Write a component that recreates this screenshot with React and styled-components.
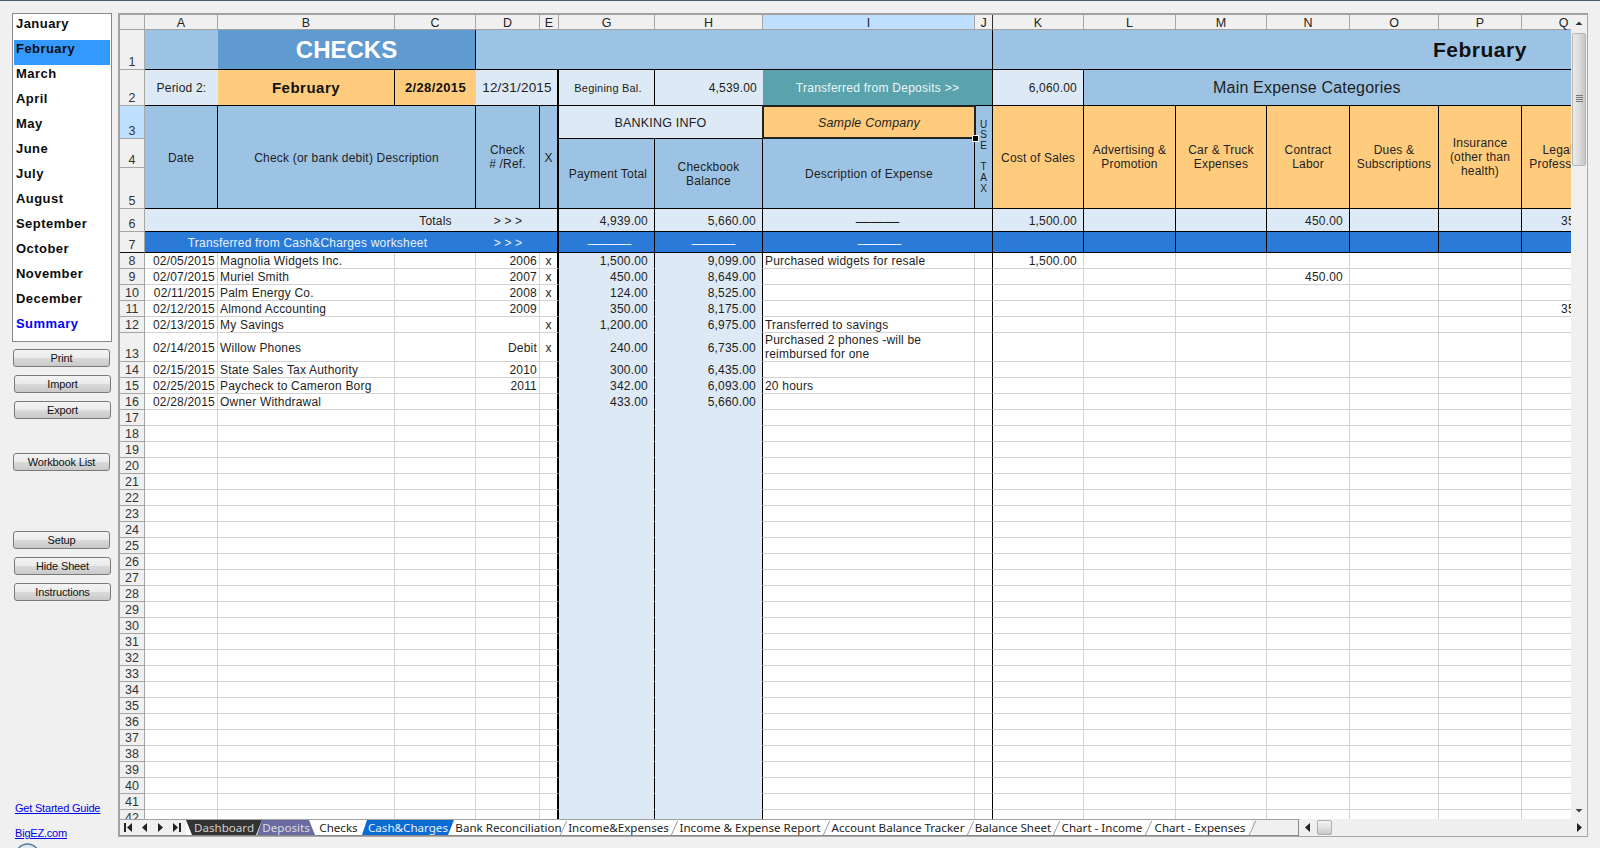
import React from "react";
import styled, { createGlobalStyle, css } from "styled-components";

const BLUE = "#9dc3e4", MID = "#5f9bd0", PALE = "#dde9f4", ORANGE = "#ffcc7e", TEAL = "#5aa3ad", DEEP = "#2a7bd7", GRID = "#d2d2d2", INK = "#1e1e1e";
const UI = `"Liberation Sans", Arial, sans-serif`;
const TAB_FONT = `"Noto Sans", "Liberation Sans", sans-serif`;

const Global = createGlobalStyle`
  html, body { margin: 0; height: 848px; overflow: hidden; background: #f0f0f0; }
  #root { height: 848px; }
`;

const Page = styled.div`
  height: 848px; overflow: hidden; background: #f0f0f0;
  border-top: 1px solid #4c5a68; box-sizing: border-box;
  display: flex; align-items: flex-start;
  font-family: "Liberation Sans", Arial, sans-serif;
`;

/* ---------- sidebar ---------- */
const Sidebar = styled.aside`
  width: 118px; flex: none; height: 847px; box-sizing: border-box; padding: 12px 0 0 12px;
  display: flex; flex-direction: column; align-items: flex-start; overflow: hidden;
`;
const MonthList = styled.ul`
  list-style: none; margin: 0; padding: 1px; width: 100px; height: 329px; box-sizing: border-box;
  background: #fff; border: 1px solid #8a8a8a;
`;
const Month = styled.li`
  height: 25px; padding: 1px 0 0 2px; box-sizing: border-box; line-height: 16px;
  font-size: 13px; font-weight: 700; letter-spacing: .45px; color: ${p => p.$summary ? "#0000ff" : "#0c0c0c"};
  background: ${p => p.$active ? "#3399ff" : "transparent"};
`;
const SideButton = styled.button`
  display: block; width: 97px; height: 18px; padding: 0; box-sizing: border-box; flex: none;
  margin: ${p => p.$top}px 0 0 ${p => p.$shift}px;
  border: 1px solid #7a7a7a; border-radius: 3px;
  background: linear-gradient(#f4f4f4 0%, #ebebeb 48%, #dadada 52%, #c9c9c9 100%);
  font: 11px/16px ${UI}; letter-spacing: -.15px; color: #111;
`;
const Guide = styled.a`
  margin: ${p => p.$top}px 0 0 ${p => p.$left}px; font: 11px/16px ${UI}; letter-spacing: -.2px; color: #0000ee; text-decoration: underline;
`;
const LogoCircle = styled.svg`
  margin: 2px 0 0 3px; flex: none;
`;

/* ---------- workbook frame ---------- */
const Frame = styled.main`
  width: 1470px; height: 824px; margin-top: 12px; flex: none; box-sizing: border-box;
  border-top: 2px solid #a2a2a2; border-left: 2px solid #a2a2a2; border-right: 1px solid #a8a8a8; border-bottom: 1px solid #a8a8a8;
  display: flex; flex-direction: column;
`;
const Upper = styled.div`
  display: flex; height: 804px; flex: none;
`;
const SheetClip = styled.div`
  width: 1451px; height: 804px; overflow: hidden; background: #fff; flex: none;
`;
const COLS = [25, 73, 177, 81, 64, 19, 96, 108, 212, 18, 91, 92, 91, 83, 89, 83, 84];
const ROW_H = [15, 40, 36, 33, 29, 41, 23, 21, 16, 16, 16, 16, 16, 29, ...Array(29).fill(16)];
const Sheet = styled.div`
  display: grid;
  grid-template-columns: ${COLS.map(w => w + "px").join(" ")};
  grid-template-rows: ${ROW_H.map(h => h + "px").join(" ")};
  font-size: 12px; letter-spacing: .2px; color: ${INK};
`;

const place = css`
  grid-column: ${p => p.$c} / span ${p => p.$cs || 1};
  grid-row: ${p => p.$r} / span ${p => p.$rs || 1};
  box-sizing: border-box; min-width: 0;
`;
const ColHead = styled.div`
  ${place}
  display: flex; align-items: center; justify-content: center; padding-top: 2px;
  background: ${p => p.$active ? "#bfdfff" : "#f0f0f0"};
  border-right: 1px solid ${p => p.$dark ? "#333" : "#a6a6a6"}; border-bottom: 1px solid #a2a2a2;
  font-size: 12.5px; letter-spacing: 0; color: #222;
`;
const RowHead = styled.div`
  ${place}
  display: flex; align-items: flex-end; justify-content: center;
  background: ${p => p.$active ? "#bfdfff" : "#f0f0f0"};
  border-right: 1px solid #a6a6a6; border-bottom: 1px solid ${p => p.$strong ? "#111" : "#a6a6a6"};
  font-size: 12.5px; line-height: 13px; letter-spacing: 0; color: #333; overflow: hidden;
`;
const Block = styled.div`
  ${place}
  display: flex; align-items: center; justify-content: ${p => p.$j || "center"};
  text-align: center; white-space: pre-line; line-height: 14px;
  background: ${p => p.$bg || "transparent"};
  border-right: ${p => p.$rw ?? 1}px solid ${p => p.$rc || "#000"};
  border-bottom: 1px solid #000;
  padding: ${p => p.$flat ? 0 : 1}px ${p => p.$pr ?? 0}px 0 ${p => p.$pl ?? 0}px;
  color: ${p => p.$fg || INK};
  font-size: ${p => p.$fs || 12}px;
  font-weight: ${p => p.$bold ? 700 : 400};
  font-style: ${p => p.$it ? "italic" : "normal"};
  letter-spacing: ${p => p.$ls ?? .2}px;
  position: ${p => p.$rel ? "relative" : "static"};
`;
const VerticalTag = styled(Block)`
  font-size: 10px; line-height: 10.7px; letter-spacing: 0; padding-top: 0;
`;
const SelectionBox = styled.span`
  position: absolute; left: -1px; top: -1px; right: -1px; bottom: -1px;
  border: 2px solid #222; pointer-events: none;
`;
const FillHandle = styled.span`
  position: absolute; right: -5px; bottom: -5px; width: 7px; height: 7px; box-sizing: border-box;
  background: #000; border: 1px solid #fff;
`;
const DataCell = styled.div`
  ${place}
  display: flex; align-items: center; justify-content: ${p => p.$j || "flex-start"};
  padding: ${p => p.$flat ? 0 : 1}px ${p => p.$pr ?? 2}px 0 ${p => p.$pl ?? 2}px;
  background: ${p => p.$pale ? PALE : "#fff"};
  border-right: ${p => p.$rw || 1}px solid ${p => p.$rc || GRID};
  border-bottom: 1px solid ${p => p.$pale ? PALE : GRID};
  line-height: 14px; white-space: pre-line; overflow: hidden;
`;

/* ---------- scrollbars and tabs ---------- */
const VScroll = styled.div`
  width: 16px; flex: none; display: flex; flex-direction: column; align-items: center; background: #f0f0f0;
`;
const ArrowBox = styled.svg`
  flex: none; display: block;
`;
const VThumb = styled.div`
  width: 14px; height: 133px; margin-top: 1px; box-sizing: border-box; flex: none;
  border: 1px solid #b6b6b6; border-radius: 2px;
  background: linear-gradient(90deg, #ececec, #dcdcdc 50%, #c6c6c6);
  display: flex; flex-direction: column; align-items: center; justify-content: flex-start; gap: 1px; padding-top: 61px;
`;
const Grip = styled.i`
  display: block; width: 7px; height: 1px; background: #777;
`;
const Spacer = styled.div`
  flex: 1;
`;
const Lower = styled.div`
  height: 17px; flex: none; display: flex; background: #f0f0f0;
`;
const NavArrows = styled.div`
  width: 66px; flex: none; display: flex; align-items: center; justify-content: space-between; padding: 0 5px 0 4px; box-sizing: border-box;
  background: #f0f0f0; border-top: 1px solid #a2a2a2; border-bottom: 1px solid #8a8a8a;
`;
const TabStrip = styled.div`
  display: flex; width: 1113px; flex: none; box-sizing: border-box;
  background: linear-gradient(90deg, #fff 1066px, #f0f0f0 1066px);
  border-top: 1px solid #a2a2a2; border-bottom: 1px solid #8a8a8a; border-right: 1px solid #8a8a8a;
  font: 11.6px/15px ${TAB_FONT}; color: #222;
`;
const Tab = styled.div`
  width: ${p => p.$w}px; flex: none; position: relative; display: flex; align-items: center; justify-content: center;
  box-sizing: border-box; white-space: nowrap;
  margin-left: ${p => p.$ml || 0}px; padding-left: ${p => p.$pl || 0}px;
  ${p => p.$fill && css`
    background: ${p.$fill}; color: ${p.$fg};
    clip-path: polygon(${p.$shape});
  `}
  ${p => p.$slash && css`
    &::after {
      content: ""; position: absolute; right: -1px; top: 1px; bottom: 0; width: 1px; background: #999;
      transform: skewX(-24deg);
    }
  `}
`;
const HScroll = styled.div`
  flex: 1; display: flex; align-items: center; padding: 0 5px 0 6px; box-sizing: border-box; background: #efefef;
`;
const HThumb = styled.div`
  width: 15px; height: 15px; margin-left: 7px; box-sizing: border-box; border: 1px solid #b0b0b0; border-radius: 2px; flex: none;
  background: linear-gradient(#f2f2f2, #e2e2e2 50%, #c8c8c8);
`;

const Left = () => <ArrowBox width="5" height="9" viewBox="0 0 5 9"><path d="M5 0v9L0 4.5z" fill="#222" /></ArrowBox>;
const Right = () => <ArrowBox width="5" height="9" viewBox="0 0 5 9"><path d="M0 0v9l5-4.5z" fill="#222" /></ArrowBox>;
const First = () => <ArrowBox width="8" height="9" viewBox="0 0 8 9"><path d="M0 0h2v9H0zM8 0v9L3 4.5z" fill="#222" /></ArrowBox>;
const Last = () => <ArrowBox width="8" height="9" viewBox="0 0 8 9"><path d="M6 0h2v9H6zM0 0v9l5-4.5z" fill="#222" /></ArrowBox>;

const MONTHS = ["January", "February", "March", "April", "May", "June", "July", "August", "September", "October", "November", "December", "Summary"];
const LETTERS = ["A", "B", "C", "D", "E", "G", "H", "I", "J", "K", "L", "M", "N", "O", "P", "Q"];
const C = Object.fromEntries(LETTERS.map((l, i) => [l, i + 2]));
const ORANGE_HEADS = [["K", "Cost of Sales"], ["L", "Advertising &\nPromotion"], ["M", "Car & Truck\nExpenses"], ["N", "Contract\nLabor"], ["O", "Dues &\nSubscriptions"], ["P", "Insurance\n(other than\nhealth)"], ["Q", "Legal &\nProfessional"]];
const ENTRIES = {
  8: { A: "02/05/2015", B: "Magnolia Widgets Inc.", D: "2006", E: "x", G: "1,500.00", H: "9,099.00", I: "Purchased widgets for resale", K: "1,500.00" },
  9: { A: "02/07/2015", B: "Muriel Smith", D: "2007", E: "x", G: "450.00", H: "8,649.00", N: "450.00" },
  10: { A: "02/11/2015", B: "Palm Energy Co.", D: "2008", E: "x", G: "124.00", H: "8,525.00" },
  11: { A: "02/12/2015", B: "Almond Accounting", D: "2009", G: "350.00", H: "8,175.00", Q: "350.00" },
  12: { A: "02/13/2015", B: "My Savings", E: "x", G: "1,200.00", H: "6,975.00", I: "Transferred to savings" },
  13: { A: "02/14/2015", B: "Willow Phones", D: "Debit", E: "x", G: "240.00", H: "6,735.00", I: "Purchased 2 phones -will be\nreimbursed for one" },
  14: { A: "02/15/2015", B: "State Sales Tax Authority", D: "2010", G: "300.00", H: "6,435.00" },
  15: { A: "02/25/2015", B: "Paycheck to Cameron Borg", D: "2011", G: "342.00", H: "6,093.00", I: "20 hours" },
  16: { A: "02/28/2015", B: "Owner Withdrawal", G: "433.00", H: "5,660.00" },
};
const numeric = l => ["G", "H", "K", "L", "M", "N", "O", "P", "Q"].includes(l);
const TABS = [
  { t: "Dashboard", w: 76, fill: "#333333", fg: "#cfcfcf", shape: "0 0, 100% 0, calc(100% - 6px) 100%, 6px 100%" },
  { t: "Deposits", w: 58, ml: -5, fill: "#6b6ba3", fg: "#dcdcdc", shape: "5px 0, calc(100% - 6px) 0, 100% 100%, 0 100%" },
  { t: "Checks", w: 47 },
  { t: "Cash&Charges", w: 92, fill: "#0b6bd3", fg: "#e8f0ff", shape: "5px 0, 100% 0, calc(100% - 6px) 100%, 0 100%" },
  { t: "Bank Reconciliation", w: 115, ml: -6, pl: 6, slash: 1 },
  { t: "Income&Expenses", w: 111, slash: 1 },
  { t: "Income & Expense Report", w: 152, slash: 1 },
  { t: "Account Balance Tracker", w: 144, slash: 1 },
  { t: "Balance Sheet", w: 86, slash: 1 },
  { t: "Chart - Income", w: 92, slash: 1 },
  { t: "Chart - Expenses", w: 104, slash: 1 },
];

function DataRows() {
  const out = [];
  for (let n = 8; n <= 42; n++) {
    const e = ENTRIES[n] || {};
    const gridRow = n + 1;
    out.push(<RowHead key={"r" + n} $c={1} $r={gridRow}>{n}</RowHead>);
    LETTERS.forEach(l => {
      const right = l === "A" || l === "D" || numeric(l);
      const black = l === "E" || l === "G" || l === "H" || l === "J";
      out.push(
        <DataCell key={l + n} $c={C[l]} $r={gridRow}
          $j={right ? "flex-end" : l === "E" ? "center" : "flex-start"}
          $pr={numeric(l) ? 6 : l === "E" ? 0 : 2}
          $pl={l === "E" ? 0 : 2}
          $pale={l === "G" || l === "H"}
          $rc={black ? "#000" : GRID}
          $rw={l === "E" ? 2 : 1}
          $flat={n === 13 && l === "I"}
        >{e[l]}</DataCell>
      );
    });
  }
  return out;
}

export default function App() {
  return (
    <Page>
      <Global />
      <Sidebar>
        <MonthList>
          {MONTHS.map(m => <Month key={m} $active={m === "February"} $summary={m === "Summary"}>{m}</Month>)}
        </MonthList>
        <SideButton $top={7} $shift={1}>Print</SideButton>
        <SideButton $top={8} $shift={2}>Import</SideButton>
        <SideButton $top={8} $shift={2}>Export</SideButton>
        <SideButton $top={34} $shift={1}>Workbook List</SideButton>
        <SideButton $top={60} $shift={1}>Setup</SideButton>
        <SideButton $top={8} $shift={2}>Hide Sheet</SideButton>
        <SideButton $top={8} $shift={2}>Instructions</SideButton>
        <Guide $top={199} $left={3} href="#">Get Started Guide</Guide>
        <Guide $top={9} $left={3} href="#">BigEZ.com</Guide>
        <LogoCircle width="25" height="25" viewBox="0 0 25 25"><circle cx="12.5" cy="12.5" r="11.5" fill="#dfe8f0" stroke="#55789a" strokeWidth="1.4" /></LogoCircle>
      </Sidebar>
      <Frame>
        <Upper>
          <SheetClip>
            <Sheet>
              <ColHead $c={1} $r={1} />
              {LETTERS.map(l => <ColHead key={l} $c={C[l]} $r={1} $active={l === "I"} $dark={l === "J"}>{l}</ColHead>)}
              {[1, 2, 3, 4, 5, 6, 7].map(n => <RowHead key={n} $c={1} $r={n + 1} $active={n === 3} $strong={n === 7}>{n}</RowHead>)}

              <Block $c={C.A} $r={2} $bg={BLUE} $rw={0} />
              <Block $c={C.B} $cs={2} $r={2} $bg={MID} $fg="#fff" $bold $fs={24} $ls={0}>CHECKS</Block>
              <Block $c={C.D} $cs={6} $r={2} $bg={BLUE} />
              <Block $c={C.K} $cs={7} $r={2} $bg={BLUE} $rw={0} $j="flex-start" $pl={440} $bold $fs={21} $ls={.5} $fg="#111">February</Block>

              <Block $c={C.A} $r={3} $bg={PALE} $rw={0}>Period 2:</Block>
              <Block $c={C.B} $r={3} $bg={ORANGE} $bold $fs={15} $ls={.5} $fg="#111">February</Block>
              <Block $c={C.C} $r={3} $bg={ORANGE} $rw={0} $bold $fs={13} $ls={.35} $fg="#111">2/28/2015</Block>
              <Block $c={C.D} $cs={2} $r={3} $bg={PALE} $rw={2} $fs={13.5} $pl={1}>12/31/2015</Block>
              <Block $c={C.G} $r={3} $bg={PALE} $fs={11} $pl={3}>Begining Bal.</Block>
              <Block $c={C.H} $r={3} $bg={PALE} $j="flex-end" $pr={6} $rw={0}>4,539.00</Block>
              <Block $c={C.I} $cs={2} $r={3} $bg={TEAL} $fg="#e9f6f6" $ls={.25}>Transferred from Deposits &gt;&gt;</Block>
              <Block $c={C.K} $r={3} $bg={PALE} $j="flex-end" $pr={6}>6,060.00</Block>
              <Block $c={C.L} $cs={6} $r={3} $bg={BLUE} $rw={0} $j="flex-start" $pl={129} $fs={16}>Main Expense Categories</Block>

              <Block $c={C.A} $r={4} $rs={3} $bg={BLUE}>Date</Block>
              <Block $c={C.B} $cs={2} $r={4} $rs={3} $bg={BLUE}>Check (or bank debit) Description</Block>
              <Block $c={C.D} $r={4} $rs={3} $bg={BLUE} $flat>{"Check\n# /Ref."}</Block>
              <Block $c={C.E} $r={4} $rs={3} $bg={BLUE} $rw={2}>X</Block>
              <Block $c={C.G} $cs={2} $r={4} $bg={PALE} $fs={12.5}>BANKING INFO</Block>
              <Block $c={C.I} $r={4} $bg={ORANGE} $it $rel $rw={0} $fs={12.5}>
                Sample Company
                <SelectionBox><FillHandle /></SelectionBox>
              </Block>
              <VerticalTag $c={C.J} $r={4} $rs={3} $bg={BLUE}>{"U\nS\nE\n\nT\nA\nX"}</VerticalTag>
              {ORANGE_HEADS.map(([l, t]) => <Block key={l} $c={C[l]} $r={4} $rs={3} $bg={ORANGE} $flat={t.includes("\n")}>{t}</Block>)}
              <Block $c={C.G} $r={5} $rs={2} $bg={BLUE} $pl={3}>Payment Total</Block>
              <Block $c={C.H} $r={5} $rs={2} $bg={BLUE} $flat>{"Checkbook\nBalance"}</Block>
              <Block $c={C.I} $r={5} $rs={2} $bg={BLUE} $pl={1}>Description of Expense</Block>

              <Block $c={C.A} $cs={2} $r={7} $bg={PALE} $rw={0} />
              <Block $c={C.C} $r={7} $bg={PALE} $rw={0}>Totals</Block>
              <Block $c={C.D} $r={7} $bg={PALE} $rw={0}>&gt; &gt; &gt;</Block>
              <Block $c={C.E} $r={7} $bg={PALE} $rw={2} />
              <Block $c={C.G} $r={7} $bg={PALE} $j="flex-end" $pr={6}>4,939.00</Block>
              <Block $c={C.H} $r={7} $bg={PALE} $j="flex-end" $pr={6}>5,660.00</Block>
              <Block $c={C.I} $cs={2} $r={7} $bg={PALE} $fs={14.5} $ls={0}>———</Block>
              {["K", "L", "M", "N", "O", "P", "Q"].map(l => (
                <Block key={l} $c={C[l]} $r={7} $bg={PALE} $j="flex-end" $pr={6}>
                  {{ K: "1,500.00", N: "450.00", Q: "350.00" }[l]}
                </Block>
              ))}

              <Block $c={C.A} $cs={3} $r={8} $bg={DEEP} $fg="#e8f2ff" $rw={0} $ls={.2} $pr={6}>Transferred from Cash&amp;Charges worksheet</Block>
              <Block $c={C.D} $r={8} $bg={DEEP} $fg="#e8f2ff" $rw={0}>&gt; &gt; &gt;</Block>
              <Block $c={C.E} $r={8} $bg={DEEP} $rw={2} />
              <Block $c={C.G} $r={8} $bg={DEEP} $fg="#e8f2ff" $fs={14.5} $ls={0} $pl={6}>———</Block>
              <Block $c={C.H} $r={8} $bg={DEEP} $fg="#e8f2ff" $fs={14.5} $ls={0} $pl={10}>———</Block>
              <Block $c={C.I} $cs={2} $r={8} $bg={DEEP} $fg="#e8f2ff" $fs={14.5} $ls={0} $pl={4}>———</Block>
              {["K", "L", "M", "N", "O", "P", "Q"].map(l => <Block key={l} $c={C[l]} $r={8} $bg={DEEP} />)}

              <DataRows />
            </Sheet>
          </SheetClip>
          <VScroll>
            <ArrowBox width="16" height="17" viewBox="0 0 16 17"><path d="M4.5 10L8 6.5 11.5 10z" fill="#333" /></ArrowBox>
            <VThumb><Grip /><Grip /><Grip /><Grip /></VThumb>
            <Spacer />
            <ArrowBox width="16" height="17" viewBox="0 0 16 17"><path d="M4.5 7L8 10.5 11.5 7z" fill="#444" /></ArrowBox>
          </VScroll>
        </Upper>
        <Lower>
          <NavArrows><First /><Left /><Right /><Last /></NavArrows>
          <TabStrip>
            {TABS.map(t => <Tab key={t.t} $w={t.w} $ml={t.ml} $pl={t.pl} $fill={t.fill} $fg={t.fg} $shape={t.shape} $slash={t.slash}>{t.t}</Tab>)}
          </TabStrip>
          <HScroll>
            <Left />
            <HThumb />
            <Spacer />
            <Right />
          </HScroll>
        </Lower>
      </Frame>
    </Page>
  );
}
